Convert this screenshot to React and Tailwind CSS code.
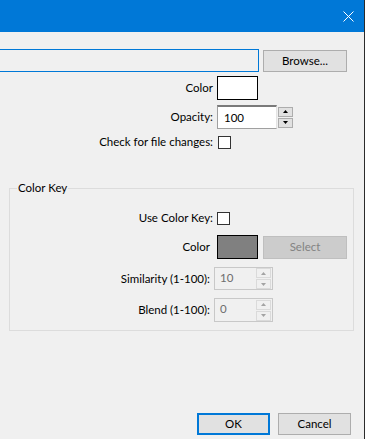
import React from "react";

function Spin({ disabled }) {
  const btn = disabled
    ? "h-[10px] w-[15px] bg-[#f0f0f0] border border-[#dadada] flex items-center justify-center"
    : "h-[10px] w-[15px] bg-[#e1e1e1] border border-[#adadad] flex items-center justify-center";
  const c = disabled ? "#a3a3a3" : "#000";
  return (
    <div className="flex flex-col gap-[1px]">
      <div className={btn}>
        <svg width="5" height="3" viewBox="0 0 5 3"><path d="M2.5 0L5 3H0z" fill={c} /></svg>
      </div>
      <div className={btn}>
        <svg width="5" height="3" viewBox="0 0 5 3"><path d="M0 0H5L2.5 3z" fill={c} /></svg>
      </div>
    </div>
  );
}

export default function App() {
  return (
    <div className="w-[365px] h-[439px] bg-[#f0f0f0] border-r border-[#2b2b2b] flex flex-col text-[11.5px] leading-[16px] text-black font-['Lato',sans-serif] overflow-hidden">
      <div className="h-[32px] shrink-0 bg-[#0078d7] flex items-center justify-end pr-[10px]">
        <svg width="11" height="11" viewBox="0 0 11 11">
          <path d="M0.5 0.5L10.5 10.5M10.5 0.5L0.5 10.5" stroke="#fff" strokeWidth="1" />
        </svg>
      </div>

      <div className="flex items-start mt-[17px]">
        <div className="w-[259px] h-[23px] border border-l-0 border-[#0078d7] bg-[#f0f0f0]" />
        <div className="ml-[4px] mt-[1px] w-[84px] h-[22px] border border-[#adadad] bg-[#e1e1e1] flex items-center justify-center">
          Browse...
        </div>
      </div>

      <div className="flex items-center mt-[4px]">
        <div className="w-[213px] text-right">Color</div>
        <div className="ml-[4px] w-[41px] h-[24px] border border-black bg-white" />
      </div>

      <div className="flex items-center mt-[5px]">
        <div className="w-[213px] text-right">Opacity:</div>
        <div className="ml-[4px] w-[60px] h-[24px] bg-white border border-[#a0a0a0] border-t-2 border-t-[#7a7a7a] border-r-[#e3e3e3] flex items-center pl-[6px]">
          100
        </div>
        <div className="ml-[1px]">
          <Spin />
        </div>
      </div>

      <div className="flex items-center mt-[5px]">
        <div className="w-[213px] text-right">Check for file changes:</div>
        <div className="ml-[5px] w-[13px] h-[13px] border border-[#333] bg-white" />
      </div>

      <div className="relative ml-[9px] mt-[38px] w-[345px] border border-[#dcdcdc] pt-[21px] pb-[8px]">
        <div className="absolute -top-[9px] left-[7px] px-[1px] bg-[#f0f0f0]">Color Key</div>

        <div className="flex items-center">
          <div className="w-[203px] text-right">Use Color Key:</div>
          <div className="ml-[4px] w-[13px] h-[13px] border border-[#333] bg-white" />
        </div>

        <div className="flex items-center mt-[9px]">
          <div className="w-[200px] text-right">Color</div>
          <div className="ml-[7px] w-[41px] h-[24px] border border-black bg-[#808080]" />
          <div className="ml-[5px] w-[84px] h-[23px] border border-[#bfbfbf] bg-[#cccccc] text-[#838383] flex items-center justify-center">
            Select
          </div>
        </div>

        <div className="flex items-center mt-[8px]">
          <div className="w-[200px] text-right">Similarity (1-100):</div>
          <div className="ml-[4px] w-[59px] h-[23px] border border-[#c8c8c8] bg-[#f0f0f0] flex items-center justify-between pl-[5px] pr-[1px] text-[#6d6d6d]">
            <span className="-mt-[2px]">10</span>
            <Spin disabled />
          </div>
        </div>

        <div className="flex items-center mt-[8px]">
          <div className="w-[200px] text-right">Blend (1-100):</div>
          <div className="ml-[4px] w-[59px] h-[24px] border border-[#c8c8c8] bg-[#f0f0f0] flex items-center justify-between pl-[5px] pr-[1px] text-[#6d6d6d]">
            <span className="-mt-[2px]">0</span>
            <Spin disabled />
          </div>
        </div>
      </div>

      <div className="flex justify-end gap-[8px] pr-[13px] mt-[82px]">
        <div className="w-[73px] h-[22px] border-2 border-[#0078d7] bg-[#e1e1e1] flex items-center justify-center">OK</div>
        <div className="w-[73px] h-[22px] border border-[#adadad] bg-[#e1e1e1] flex items-center justify-center">Cancel</div>
      </div>
    </div>
  );
}
